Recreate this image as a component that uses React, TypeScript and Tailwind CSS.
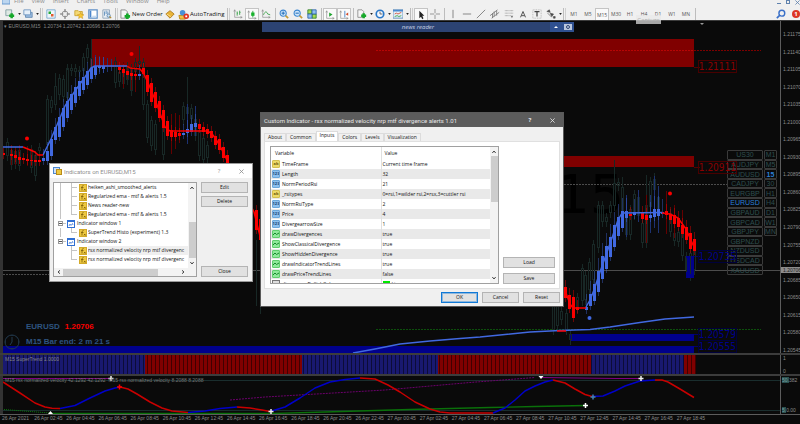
import React from "react";

type Bar = [x: number, top: number, bottom: number];

const BLUE = "#4169e1";
const RED = "#fb0000";
const SLATE = "#182826";

/* ---------- toolbar ---------- */

const menuItems = ["File", "View", "Insert", "Charts", "Tools", "Window", "Help"];
const timeframes = ["M1", "M5", "M15", "M30", "H1", "H4", "D1", "W1", "MN"];

function Tool({ label, active, children }: { label: string; active?: boolean; children: React.ReactNode }) {
  return (
    <button
      type="button"
      aria-label={label}
      className={`flex h-3 w-[14px] shrink-0 items-center justify-center ${active ? "border-x border-t border-[#c4c4c4] bg-[#fafafa]" : ""}`}
    >
      <svg viewBox="0 0 12 12" className="size-[10px] shrink-0" fill="none">
        {children}
      </svg>
    </button>
  );
}

function Drop() {
  return (
    <span className="flex w-1 shrink-0 items-center justify-center">
      <svg viewBox="0 0 4 3" className="h-[2px] w-[3px] shrink-0">
        <path d="M0 0h4L2 3z" fill="#222" />
      </svg>
    </span>
  );
}

function Sep({ wide }: { wide?: boolean }) {
  return (
    <span className={`flex h-3 shrink-0 justify-center gap-px ${wide ? "w-[5px]" : "w-1"}`}>
      <i className="w-px bg-[#bdbdbd]" />
      {wide && <i className="w-px bg-[#d0d0d0]" />}
    </span>
  );
}

const Plus = () => <path d="M8 5v6M5 8h6" stroke="#16a82a" strokeWidth="3" />;
const Axes = () => <path d="M2 1v9h9M1 3l1-2 1 2M9 9l2 1-2 1" stroke="#8c8c8c" strokeWidth=".8" />;

function Toolbar() {
  return (
    <div className="flex h-3 items-center bg-[#f0f0f0] pl-[3px] font-['Open_Sans','Noto_Sans',sans-serif] text-[6px] leading-3 text-[#111]">
      <Tool label="New chart">
        <path d="M1 1h7v7H1z" fill="#dfe9e4" stroke="#7d9aa0" />
        <Plus />
      </Tool>
      <Drop />
      <Tool label="Profiles">
        <path d="M3 4h8v6H3z" fill="#9bbce0" stroke="#5f87b0" />
        <path d="M1 1h8v6H1z" fill="#e6f0fa" stroke="#6a93bd" />
      </Tool>
      <Drop />
      <Sep wide />
      <Tool label="Market watch">
        <path d="M1 1h10v10H1z" fill="#eef5fb" stroke="#6fa3cd" />
        <path d="M3 3h3v3H3z" fill="#27a836" />
        <path d="M6 6h3v3H6z" fill="#e25a2c" />
      </Tool>
      <Tool label="Data window">
        <circle cx="6" cy="6" r="3.500" stroke="#888" />
        <path d="M6 0v4M6 8v4M0 6h4M8 6h4" stroke="#777" strokeWidth="1.300" />
      </Tool>
      <Tool label="Navigator">
        <path d="M1 2h4l1 1h4v5H1z" fill="#f4d873" stroke="#c9a02c" />
        <path d="M8 4l1 2.500 3 .3-2 2 .5 2.700L8 10l-2.500 1.500.5-2.700-2-2 3-.3z" fill="#f9c631" stroke="#b98714" strokeWidth=".5" />
      </Tool>
      <Tool label="Terminal">
        <path d="M1 1h10v10H1z" fill="#fff" stroke="#5d8fc6" strokeWidth="1.500" />
        <path d="M2 2h2v8H2z" fill="#4c86cc" />
        <path d="M5 8h5v2H5z" fill="#c9dcf0" />
      </Tool>
      <Tool label="Strategy tester">
        <path d="M1 1h8v10H1z" fill="#e8eef4" stroke="#8ba0b5" />
        <path d="M3 3v5M5 2v4M7 3v4" stroke="#5588b8" />
        <circle cx="8" cy="8" r="2" stroke="#5c87ae" fill="#cfe3f5" />
        <path d="M9 9l2 2" stroke="#b48a30" strokeWidth="1.500" />
      </Tool>
      <Sep wide />
      <button type="button" className="flex h-3 w-[44px] shrink-0 items-center">
        <svg viewBox="0 0 12 12" className="mx-px size-[11px] shrink-0" fill="none">
          <path d="M1 1h5l2 2v7H1z" fill="#f5f5f5" stroke="#888" />
          <Plus />
        </svg>
        <span className="whitespace-nowrap">New Order</span>
      </button>
      <Tool label="MetaEditor">
        <path d="M1 6l5-4 5 4-5 5z" fill="#e9b437" stroke="#a9761a" />
        <path d="M2 6l5 3" stroke="#fbe39a" />
      </Tool>
      <button type="button" className="flex h-3 w-[49px] shrink-0 items-center">
        <svg viewBox="0 0 12 12" className="mx-px size-[11px] shrink-0" fill="none">
          <path d="M1 7h8l-1 4H2z" fill="#f0c245" stroke="#b98714" />
          <circle cx="5" cy="4" r="3" fill="#4a90d6" />
          <circle cx="9" cy="8" r="3" fill="#e03322" />
          <path d="M8 7h2v2H8z" fill="#fff" />
        </svg>
        <span className="whitespace-nowrap">AutoTrading</span>
      </button>
      <Sep wide />
      <Tool label="Bar chart">
        <Axes />
        <path d="M5 3v5M8 2v5M5 5h1M8 4h1" stroke="#2c9b3c" />
      </Tool>
      <Tool label="Candlesticks" active>
        <Axes />
        <path d="M7 1v8" stroke="#1a9b2a" />
        <path d="M5 3h4v4H5z" fill="#17b32c" />
      </Tool>
      <Tool label="Line chart">
        <Axes />
        <path d="M3 7c2-5 4-4 5-1l3 1" stroke="#2c9b3c" />
      </Tool>
      <Sep />
      <Tool label="Zoom in">
        <path d="M7 7l4 4" stroke="#c59a35" strokeWidth="2" />
        <circle cx="5" cy="5" r="3.700" fill="#cfe6fb" stroke="#3b86cf" strokeWidth="1.300" />
        <path d="M3 5h4M5 3v4" stroke="#1f6bb5" strokeWidth="1.200" />
      </Tool>
      <Tool label="Zoom out">
        <path d="M7 7l4 4" stroke="#c59a35" strokeWidth="2" />
        <circle cx="5" cy="5" r="3.700" fill="#cfe6fb" stroke="#3b86cf" strokeWidth="1.300" />
        <path d="M3 5h4" stroke="#1f6bb5" strokeWidth="1.200" />
      </Tool>
      <Tool label="Tile windows">
        <path d="M1 1h5v5H1zM6 6h5v5H6z" fill="#a6dc4e" stroke="#2c7d2c" />
        <path d="M6 1h5v5H6zM1 6h5v5H1z" fill="#8fc0ee" stroke="#2b62a8" />
      </Tool>
      <Sep />
      <Tool label="Auto scroll" active>
        <Axes />
        <path d="M5 3l4 2.500L5 8z" fill="#1fa52f" />
      </Tool>
      <Tool label="Chart shift" active>
        <Axes />
        <path d="M7 1v8" stroke="#3b78c2" />
        <path d="M11 3L8 5l3 2z" fill="#d34a28" />
      </Tool>
      <Sep />
      <Tool label="Indicators">
        <path d="M1 1h5l2 2v7H1z" fill="#f5f5f5" stroke="#888" />
        <Plus />
      </Tool>
      <Drop />
      <Tool label="Periodicity">
        <circle cx="6" cy="6" r="4.500" fill="#f4f9ff" stroke="#2a78c8" strokeWidth="2" />
        <path d="M6 3v3h3" stroke="#555" />
      </Tool>
      <Drop />
      <Tool label="Templates">
        <path d="M0 1h12v10H0z" fill="#e5effa" stroke="#5585b5" />
        <path d="M0 1h12v2H0z" fill="#4c8bd0" />
        <path d="M2 6l2-1 2 1 4-2" stroke="#d04a2a" />
        <path d="M2 9l3-1 2 1 3-1" stroke="#2ca03a" />
      </Tool>
      <Drop />
      <Sep wide />
      <Tool label="Cursor" active>
        <path d="M4 1v9l2-2 1.500 3 1.500-1-1.500-3H10z" fill="#222" />
      </Tool>
      <Tool label="Crosshair">
        <path d="M6 0v5M6 7v5M0 6h5M7 6h5" stroke="#888" />
      </Tool>
      <Sep />
      <Tool label="Vertical line">
        <path d="M6 1v10" stroke="#888" strokeWidth="1.200" />
      </Tool>
      <Tool label="Horizontal line">
        <path d="M1 6h10" stroke="#888" strokeWidth="1.200" />
      </Tool>
      <Tool label="Trendline">
        <path d="M1 11L11 1" stroke="#888" strokeWidth="1.200" />
      </Tool>
      <Tool label="Channel">
        <path d="M0 8l9-7M2 11l9-7M3 5v6M5 3v6M8 2v6" stroke="#777" />
      </Tool>
      <Tool label="Fibonacci">
        <path d="M1 2h10M1 5h10M1 8h7" stroke="#999" strokeDasharray="1 .5" />
        <path d="M8 8h3l-1.500 3z" fill="#777" />
      </Tool>
      <Tool label="Text">
        <path d="M3 10L6 3l3 7M4 8h4" stroke="#555" strokeWidth="1.200" />
      </Tool>
      <Tool label="Text label">
        <path d="M1 1h10v10H1z" stroke="#aaa" strokeDasharray="1 1" />
        <path d="M3 3h6M6 3v6" stroke="#444" strokeWidth="1.500" />
      </Tool>
      <Tool label="Arrows">
        <path d="M1 3l3-2 1 3zM5 5l4 1-2 3zM9 9h2v2H9zM2 5l5 5" fill="#444" stroke="#555" strokeWidth=".8" />
      </Tool>
      <Drop />
      <Sep wide />
      {timeframes.map((t) => (
        <button
          key={t}
          type="button"
          className={`flex h-3 w-[14px] shrink-0 items-center justify-center text-[5px] text-[#555] ${t === "M15" ? "border-x border-t border-[#c4c4c4] bg-[#fafafa]" : ""}`}
        >
          {t}
        </button>
      ))}
      <Sep />
      <span className="flex-1" />
      <Tool label="Search">
        <circle cx="7" cy="5" r="3.500" stroke="#3a70c8" strokeWidth="1.700" />
        <path d="M5 7l-4 4" stroke="#3a70c8" strokeWidth="2" />
      </Tool>
      <button type="button" aria-label="Alerts" className="flex w-3 shrink-0 items-center justify-end">
        <b className="flex size-2 items-center justify-center rounded-full bg-[#dc3524] text-[6px] leading-none text-white">1</b>
      </button>
    </div>
  );
}

/* ---------- chart drawing ---------- */

const upLeft: Bar[] = [[43, 158, 161], [47, 151, 161], [51, 139, 156], [55, 127, 140], [59, 117, 137], [63, 108, 127], [67, 101, 118], [71, 94, 110], [75, 87, 103], [79, 81, 96], [83, 77, 90], [87, 71, 85], [91, 68, 79], [95, 66, 75], [99, 66, 68], [103, 66, 69], [139, 74, 76], [183, 133, 135], [187, 129, 133], [191, 124, 132], [195, 123, 127]];
const downLeft: Bar[] = [[3, 153, 155], [11, 154, 156], [15, 155, 158], [19, 157, 160], [23, 158, 160], [27, 159, 161], [31, 160, 161], [35, 160, 162], [39, 160, 162], [119, 67, 70], [123, 69, 73], [127, 71, 75], [131, 73, 76], [135, 74, 76], [143, 68, 74], [147, 75, 92], [151, 83, 102], [155, 92, 108], [159, 101, 118], [163, 110, 128], [167, 121, 136], [171, 130, 137], [175, 132, 137], [179, 133, 136], [199, 124, 129], [203, 127, 132], [207, 129, 134], [211, 131, 138], [215, 136, 145], [219, 139, 150], [223, 147, 158], [227, 155, 172], [251, 203, 224], [256, 210, 230], [260, 219, 240]];
const upRight: Bar[] = [[586, 307, 310], [590, 294, 306], [594, 284, 301], [598, 271, 292], [602, 256, 279], [606, 246, 269], [610, 237, 257], [614, 225, 247], [618, 217, 236], [622, 211, 228], [626, 211, 218], [634, 212, 215], [650, 215, 218], [654, 209, 217], [658, 209, 216], [662, 212, 214]];
const downRight: Bar[] = [[565, 287, 298], [569, 295, 309], [573, 297, 318], [577, 307, 310], [630, 214, 216], [642, 213, 219], [646, 215, 220], [666, 211, 215], [670, 214, 220], [674, 215, 224], [678, 218, 227], [682, 225, 234], [686, 227, 240], [690, 233, 249], [694, 239, 251]];
const ghosts: Bar[] = [[7, 142, 156], [11, 150, 165], [15, 151, 164], [19, 150, 166], [31, 149, 168], [35, 155, 176], [39, 147, 151], [47, 99, 145], [51, 100, 108], [55, 86, 105], [59, 78, 95], [63, 79, 97], [67, 68, 98], [71, 68, 71], [75, 68, 72], [79, 70, 72], [83, 57, 71], [87, 48, 58], [91, 58, 68], [115, 61, 83], [119, 72, 82], [123, 72, 84], [127, 66, 80], [131, 68, 91], [135, 62, 72], [139, 61, 64], [143, 62, 105], [147, 104, 138], [151, 120, 146], [155, 124, 150], [163, 120, 155], [183, 106, 120], [187, 107, 114], [191, 108, 119], [195, 119, 136], [199, 130, 156], [203, 138, 160], [207, 145, 158], [553, 306, 330], [557, 300, 326], [561, 311, 320], [566, 313, 330], [570, 334, 340], [577, 297, 308], [582, 268, 301], [585, 275, 300], [589, 262, 290], [593, 244, 280], [598, 205, 248], [602, 205, 222], [606, 217, 222], [610, 205, 213], [614, 183, 206], [618, 182, 186], [622, 187, 212], [626, 216, 235], [630, 209, 235], [634, 194, 215], [638, 197, 216], [642, 223, 243], [646, 205, 243], [650, 181, 207], [654, 179, 190], [658, 197, 215], [670, 213, 232], [674, 233, 241], [678, 232, 242], [682, 229, 256], [686, 256, 270], [690, 253, 276], [694, 246, 270]];

function Bars({ bars, color, reach }: { bars: Bar[]; color: string; reach: number }) {
  return (
    <g>
      {bars.map(([x, a, b]) => (
        <g key={x} fill={color}>
          <rect x={x} y={a - reach} width="1" height={b - a + reach + 4} opacity=".4" />
          <rect x={x - 1} y={a} width="3" height={b - a} />
        </g>
      ))}
    </g>
  );
}

function PriceDrawing() {
  return (
    <svg viewBox="0 21 780 332" preserveAspectRatio="none" className="absolute inset-0 size-full" fill="none">
      <path d="M376 50.500H761" stroke="#7c0000" strokeDasharray="2 1" />
      <g fill="#800000">
        <rect x="91" y="39" width="603" height="28" />
        <rect x="540" y="156" width="154" height="11" />
      </g>
      <path d="M376 50.500H694" stroke="#b80404" strokeDasharray="2 1" />
      <path d="M694 67.500h6M694 167.500h6" stroke="#500" />
      <g fill="#00008b">
        <rect x="3" y="346" width="691" height="7" />
        <rect x="570" y="334" width="124" height="7" />
      </g>
      <path d="M694 334.500h6M694 346.500h6M694 256.500h6" stroke="#00006b" />
      <path d="M376 329.500H761" stroke="#0c500c" strokeDasharray="2 1" />
      <path d="M3 274.500H50M564 184.500H727" stroke="#4c4c4c" strokeDasharray="2 1" />
      <path d="M3 270.500H780" stroke="#4c4c4c" />

      {ghosts.map(([x, a, b]) => (
        <g key={x} stroke={SLATE} strokeWidth="1">
          <path d={`M${x + 0.5} ${a - 4}V${a}M${x + 0.5} ${b}V${b + 5}`} />
          <rect x={x - 0.5} y={a + 0.5} width="2" height={b - a - 1} />
        </g>
      ))}
      <path d="M55.500 73v13M67.500 64v6M91.500 39v20M187.500 77v30M139.500 46v15M614.500 160v23M622.500 177v10M646.500 175v30M654.500 173v6M256.500 240v66M260.500 240v74" stroke={SLATE} />
      <path d="M11.500 145v20M15.500 147v18M19.500 145v19M27.500 146v20M31.500 148v18M123.500 62v26M131.500 70v20M135.500 72v20M171.500 114v40M175.500 113v36M179.500 115v28M646.500 195v48M666.500 191v43M674.500 205v33M682.500 210v24" stroke="#640000" />
      <path d="M95.500 55v22M99.500 56v18M103.500 57v16M107.500 58v14M111.500 59v12M187.500 104v40M195.500 106v30M626.500 195v42M638.500 190v32M650.500 195v38M654.500 176v52M658.500 186v47" stroke="#1d3272" />
      <rect x="686" y="256" width="8" height="22" fill="#00008b" />
      <path d="M686.500 258v14M690.500 256v18" stroke={SLATE} />

      <Bars bars={upLeft} color={BLUE} reach={9} />
      <Bars bars={upRight} color={BLUE} reach={13} />
      <Bars bars={downLeft} color={RED} reach={5} />
      <Bars bars={downRight} color={RED} reach={7} />

      <g strokeWidth="1.500" strokeLinejoin="round">
        <path
          d="M3 147H23M43 155L51 139L57 125L65 106L75 91L85 77L91 68L95 66H127M586 307L590 300L594 290L600 272L606 255L612 238L618 220L622 213L662 212.500M353 353L375 349L400 344L430 341L460 338.500L480 337L500 335L530 332L560 330.500L590 329.500L610 327L640 322.500L665 319L694 317"
          stroke={BLUE}
        />
        <path
          d="M23 147L35 152L38 155H43M127 66L130 68L140 69L144 74L149 85L156 102L165 127L170 131H208L213 135L217 141L220 146L226 158L230 168M249 202L254 212L260 236M562 284L566 293L570 304L573 308H586M557 331H566M662 213L670 214L678 218L686 229L694 247"
          stroke={RED}
        />
      </g>
      <g fill={RED}>
        <circle cx="131.500" cy="54" r="2" />
        <circle cx="27" cy="138.500" r="2" />
        <circle cx="670" cy="193.500" r="2" />
      </g>
      <circle cx="589.500" cy="318" r="2" fill={BLUE} />
      <path d="M700 23h4l-2 2z" fill="#999" />
      <g stroke="#223a4e">
        <circle cx="12" cy="342" r="7" />
        <path d="M12 337v5l-2 3M12 335v1M12 348v1M5 342h1M18 342h1" />
      </g>
    </svg>
  );
}

const trend: [number, number, string][] = [
  [3, 145, "#191970"],
  [145, 302, "#800000"],
  [302, 438, "#191970"],
  [438, 591, "#800000"],
  [591, 684, "#191970"],
  [684, 696, "#800000"],
];

function TrendDrawing() {
  const gaps = Array.from({ length: 173 }, (_, i) => 7 + i * 4);
  return (
    <svg viewBox="0 355 780 19" preserveAspectRatio="none" className="absolute inset-0 size-full">
      {trend.map(([a, b, c]) => (
        <rect key={a} x={a} y="355" width={b - a} height="19" fill={c} />
      ))}
      {gaps.map((x) => (
        <rect key={x} x={x} y="355" width="1" height="19" fill="#000" opacity=".5" />
      ))}
    </svg>
  );
}

function Star({ x, y, color }: { x: number; y: number; color: string }) {
  return <path d={`M${x - 2.5} ${y}h5M${x} ${y - 2.5}v5`} stroke={color} strokeWidth="1.500" />;
}

function OscillatorDrawing() {
  return (
    <svg viewBox="0 376 780 38" preserveAspectRatio="none" className="absolute inset-0 size-full" fill="none">
      <path d="M3 380.500H780M3 410.500H780" stroke="#1a2e2e" />
      <path d="M3 378.500H111M541 377.500L617 378.500H641" stroke="#800080" />
      <path d="M230 400L265 397L385 390L470 382.500L535 377.500" stroke="#6c006c" strokeDasharray="2 1" />
      <path d="M4 409.500L50 413" stroke="#0a7a0a" strokeDasharray="1 1" />
      <path d="M50 413.500H275L325 412L410 409.500L490 407.500L535 406.500L586 405.500" stroke="#0a700a" strokeWidth="1.300" />
      <g strokeWidth="1.500" strokeLinejoin="round">
        <path
          d="M3 382L20 393L35 403L45 407L52 408.300L60 408.500M120 387L128 389L137 394L150 402L162 408L172 411L188 412.500M237 407L250 408L262 410L270 411.500M360 378L375 379L388 385L400 392L415 402L430 409L440 412L450 413H493M553 380L565 383L575 389L585 394.500L592 396.500M655 380H662L668 382L680 389L694 397.500"
          stroke="#c80000"
        />
        <path
          d="M60 408.500L75 405.500L90 398L105 391L115 388L120 387M188 412.500L205 411L220 408.500L237 407M270 411.500L285 407L300 398L315 388L330 382L345 379.500L360 378M493 413L505 408L515 400L525 391L535 386L545 382L553 380M592 396.500L603 396L615 391L625 386L640 381L655 380"
          stroke="#0000c8"
        />
      </g>
      <Star x={111} y={378.5} color="#eee" />
      <Star x={119.5} y={387} color={RED} />
      <Star x={271} y={411.5} color="#eee" />
      <Star x={641} y={378.5} color="#eee" />
      <Star x={593} y={397} color="#4682b4" />
      <Star x={585.5} y={405.5} color="#fff" />
      <path d="M48 414h5l-2.500-3zM538.500 376h5l-2.500 3z" fill="#fff" />
    </svg>
  );
}

/* ---------- chart overlays ---------- */

const symbols: [string, string?][] = [
  ["US30", "M1"], ["AUDJPY", "M5"], ["AUDUSD", "15"], ["CADJPY", "30"], ["EURGBP", "H1"], ["EURUSD", "H4"], ["GBPAUD", "D1"],
  ["GBPCAD", "W1"], ["GBPJPY", "MN"], ["GBPNZD"], ["NZDUSD"], ["USDCAD"], ["XAUUSD"],
];

function SymbolPanel() {
  const cell = "flex items-center justify-center rounded-[1px] border border-[#3a3a3a]";
  return (
    <div className="absolute top-[129px] right-[3px] flex h-[125px] w-[50px] flex-col text-[7px] leading-none text-[#2f4f4f]">
      {symbols.map(([s, t]) => (
        <div key={s} className="flex flex-1 gap-px">
          <button type="button" className={`${cell} w-9 ${s === "EURUSD" ? "text-[#2c80d8]" : ""}`}>{s}</button>
          {t && <button type="button" className={`${cell} w-[13px] ${t === "15" ? "font-bold text-[#2c80d8]" : ""}`}>{t}</button>}
        </div>
      ))}
    </div>
  );
}

function PriceLabel({ place, value, blue }: { place: string; value: string; blue?: boolean }) {
  return (
    <span
      className={`absolute right-[43px] flex h-[13px] items-center border font-['DejaVu_Sans_Condensed','DejaVu_Sans',sans-serif] text-[10px] leading-none ${place} ${blue ? "border-[#00003c] text-[#00008b]" : "border-[#480000] text-[#8b0000]"}`}
    >
      {value}
    </span>
  );
}

const prices = ["1.21175", "1.21140", "1.21105", "1.21070", "1.21035", "1.21000", "1.20965", "1.20930", "1.20895", "1.20860", "1.20825", "1.20790", "1.20755", "1.20720", "1.20685", "1.20650", "1.20615", "1.20580", "1.20545"];

const times = [
  "26 Apr 2021",
  ...["02", "04", "06", "08", "10", "12", "14", "16", "18", "20", "22"].map((h) => `26 Apr ${h}:45`),
  ...["00", "02", "04", "06", "08", "10", "12", "14", "16", "18"].map((h) => `27 Apr ${h}:45`),
];

function AxisColumn({ children }: { children?: React.ReactNode }) {
  return <div className="relative w-5 shrink-0 overflow-hidden border-l border-[#5c5c5c] text-[5px] leading-[6px] text-[#8a8a8a]">{children}</div>;
}

function Chart() {
  return (
    <section className="flex min-h-[403px] flex-1 flex-col bg-[#0a0a0a] font-['Liberation_Sans',Arial,sans-serif]">
      <div className="flex flex-1 border-t border-[#3c3c3c]">
        <div className="relative flex-1 overflow-hidden border-l-[3px] border-[#333]">
          <span aria-hidden="true" className="absolute top-[142px] right-[156px] font-['DejaVu_Sans',sans-serif] text-[54px] leading-[64px] text-black">M15</span>
          <div className="absolute inset-y-0 right-0 -left-[3px]">
            <PriceDrawing />
          </div>
          <p className="absolute top-[2px] left-[1px] text-[5px] leading-[6px] text-[#858585]">▾ EURUSD,M15&nbsp; 1.20734 1.20742 1.20696 1.20706</p>
          <SymbolPanel />
          <PriceLabel place="top-[39px]" value="1.21111" />
          <PriceLabel place="top-[140px]" value="1.20911" />
          <PriceLabel place="top-[229px]" value="1.20735" blue />
          <PriceLabel place="top-[307px]" value="1.20579" blue />
          <PriceLabel place="top-[319px]" value="1.20555" blue />
          <div className="absolute bottom-[6px] left-[23px] flex flex-col gap-1 text-[8px] leading-[11px] font-bold text-[#2e5480]">
            <p className="flex gap-[5px]"><span>EURUSD</span><span className="text-[#fb0000]">1.20706</span></p>
            <p>M15 Bar end: 2 m 21 s</p>
          </div>
        </div>
        <AxisColumn>
          <div className="absolute inset-x-0 top-[10px] bottom-0 flex flex-col justify-between">
            {prices.map((p) => <span key={p} className="pl-[2px]">{p}</span>)}
          </div>
          <span className="absolute inset-x-0 top-[246px] bg-[#8c8c8c] pl-[2px] text-[#222]">1.20706</span>
        </AxisColumn>
      </div>

      <div className="flex h-[21px] border-t-2 border-[#3c3c3c]">
        <div className="relative flex-1 overflow-hidden border-l-[3px] border-[#333]">
          <div className="absolute inset-y-0 right-0 -left-[3px]"><TrendDrawing /></div>
          <p className="relative pt-px pl-[2px] text-[5px] leading-[6px] text-[#858585]">M15 SuperTrend 1.0000</p>
        </div>
        <AxisColumn>
          <div className="flex h-full flex-col justify-between pl-[2px]"><span>1</span><span>0</span></div>
        </AxisColumn>
      </div>

      <div className="flex h-10 border-t-2 border-[#3c3c3c]">
        <div className="relative flex-1 overflow-hidden border-l-[3px] border-[#333]">
          <div className="absolute inset-y-0 right-0 -left-[3px]"><OscillatorDrawing /></div>
          <p className="relative pt-px pl-[2px] text-[5px] leading-[6px] text-[#777]">
            M15 rsx normalized velocity 42.1292 42.1292&nbsp; M15 rsx normalized velocity 8.2088 8.2088
          </p>
        </div>
        <AxisColumn>
          <div className="flex h-full flex-col justify-between py-px pl-px">
            <span><span className="bg-[#2a5050] text-[#78a0a0]">50.</span>382</span>
            <span><span className="bg-[#2a5050] text-[#78a0a0]">5.</span>0.00</span>
          </div>
        </AxisColumn>
      </div>

      <div className="h-[10px] border-t border-[#5c5c5c] text-[5px] leading-[7px] text-[#8a8a8a]">
        <div className="grid w-[88.6%] grid-cols-[repeat(22,minmax(0,1fr))] pl-[2px]">
          {times.map((t) => <span key={t} className="whitespace-nowrap">{t}</span>)}
        </div>
      </div>
    </section>
  );
}

/* ---------- windows ---------- */

function WinButton({ children, primary, className }: { children: React.ReactNode; primary?: boolean; className: string }) {
  return (
    <button
      type="button"
      className={`flex h-[11px] items-center justify-center border bg-[#e1e1e1] text-[5px] leading-none text-[#111] ${primary ? "border-[#1079d6] ring-1 ring-[#1079d6]/40 ring-inset" : "border-[#b4b4b4]"} ${className}`}
    >
      {children}
    </button>
  );
}

function Cross() {
  return (
    <svg viewBox="0 0 6 6" className="size-[5px]" fill="none" stroke="currentColor">
      <path d="M.5.5l5 5M5.500.5l-5 5" />
    </svg>
  );
}

function Chevron({ turn }: { turn: string }) {
  return (
    <svg viewBox="0 0 6 6" className={`size-1 ${turn}`} fill="none" stroke="#444" strokeWidth="1.500">
      <path d="M.5 4.500L3 1.500l2.500 3" />
    </svg>
  );
}

function FnIcon() {
  return (
    <svg viewBox="0 0 8 8" className="size-[8px] shrink-0" fill="none">
      <rect x=".5" y=".5" width="7" height="7" fill="#edc840" stroke="#d3aa2a" />
      <path d="M4.500 1.500c-1.500 0-1.500 1-1.500 5M2 3.500h2.500M5 5l1.500 1.500M6.500 5L5 6.500" stroke="#7a5a08" strokeWidth=".8" />
    </svg>
  );
}

function WindowIcon() {
  return (
    <svg viewBox="0 0 8 8" className="size-[8px] shrink-0" fill="none">
      <rect x=".5" y=".5" width="7" height="7" fill="#fff" stroke="#2f6fd4" />
      <path d="M0 0h8v2H0z" fill="#2f6fd4" />
      <path d="M2 6l1-2 1 1.500L5.500 3.500 6 5" stroke="#2f6fd4" strokeWidth=".7" />
    </svg>
  );
}

const tree: { text: string; parent?: boolean; chosen?: boolean; last?: boolean }[] = [
  { text: "heiken_ashi_smoothed_alerts" },
  { text: "Regularized ema - mtf & alerts 1.5" },
  { text: "News reader-new" },
  { text: "Regularized ema - mtf & alerts 1.5", last: true },
  { text: "Indicator window 1", parent: true },
  { text: "SuperTrend Histo (experiment) 1.3", last: true },
  { text: "Indicator window 2", parent: true },
  { text: "rsx normalized velocity nrp mtf divergenc", chosen: true },
  { text: "rsx normalized velocity nrp mtf divergenc", last: true },
];

function IndicatorsWindow() {
  return (
    <section className="absolute top-[163px] left-[49px] flex w-[204px] flex-col border border-[#9a9a9a] bg-[#f0f0f0] font-['Open_Sans','Noto_Sans',sans-serif] text-[#111]">
      <header className="flex h-[14px] items-center bg-white pl-[3px] text-[#909090]">
        <svg viewBox="0 0 9 8" className="mr-[2px] h-2 w-[9px]" fill="none">
          <rect x=".5" y=".5" width="6" height="6" fill="#cfe1f7" stroke="#4b86cf" />
          <rect x="3.500" y="2.500" width="5" height="5" fill="#edc840" stroke="#b98c18" />
        </svg>
        <h2 className="flex-1 font-['Roboto','Open_Sans',sans-serif] text-[6px]">Indicators on EURUSD,M15</h2>
        <button type="button" aria-label="Help" className="w-[22px] text-[6px]">?</button>
        <button type="button" aria-label="Close window" className="flex w-[22px] justify-center"><Cross /></button>
      </header>
      <div className="flex gap-1 p-[4px] pl-[3px]">
        <div className="flex h-[95px] min-w-0 flex-1 flex-col border border-[#a0a0a0] bg-white">
          <div className="flex min-h-0 flex-1">
            <ul className="min-w-0 flex-1 overflow-hidden text-[5px] leading-[9px]">
              {tree.map((n, i) => (
                <li key={i} className="flex h-[9px] items-center whitespace-nowrap">
                  {n.parent ? (
                    <>
                      <span className="ml-1 flex size-[5px] items-center justify-center border border-[#999]"><i className="h-px w-[3px] bg-[#555]" /></span>
                      <i className="mr-px h-px w-[3px] bg-[#c4c4c4]" />
                      <WindowIcon />
                      <span className="pl-[2px]">{n.text}</span>
                    </>
                  ) : (
                    <>
                      <i className={`ml-[6px] h-[9px] w-[11px] ${i < 6 ? "border-l border-[#c4c4c4]" : ""}`} />
                      <span className="flex h-[9px] w-[6px] flex-col">
                        <i className="h-[5px] border-b border-l border-[#c4c4c4]" />
                        {!n.last && <i className="flex-1 border-l border-[#c4c4c4]" />}
                      </span>
                      <span className="mr-px w-px" />
                      <FnIcon />
                      <span className={`ml-px flex-1 overflow-hidden ${n.chosen ? "bg-[#efefef]" : ""}`}>{n.text}</span>
                    </>
                  )}
                </li>
              ))}
            </ul>
            <div className="flex w-2 flex-col items-center justify-between bg-[#f3f3f3] py-[3px]">
              <Chevron turn="" />
              <i className="mt-[32px] w-[7px] flex-1 bg-[#cdcdcd]" />
              <Chevron turn="mt-[3px] rotate-180" />
            </div>
          </div>
          <div className="flex h-2 items-center bg-[#f3f3f3] px-[3px]">
            <Chevron turn="-rotate-90" />
            <i className="mx-[2px] h-[7px] w-[95px] bg-[#cdcdcd]" />
            <span className="flex-1" />
            <span className="mr-2 flex"><Chevron turn="rotate-90" /></span>
          </div>
        </div>
        <div className="flex w-[47px] flex-col gap-[3px]">
          <WinButton className="w-full">Edit</WinButton>
          <WinButton className="w-full">Delete</WinButton>
          <span className="flex-1" />
          <WinButton className="w-full">Close</WinButton>
        </div>
      </div>
    </section>
  );
}

type Kind = "ab" | "123" | "bool";
const inputs: [Kind, string, string][] = [
  ["ab", "TimeFrame", "Current time frame"],
  ["123", "Length", "32"],
  ["123", "NormPeriodRsi", "21"],
  ["ab", "_rsitypes", "0=rsi,1=wilder rsi,2=rsx,3=cuttler rsi"],
  ["123", "NormRsiType", "2"],
  ["123", "Price", "4"],
  ["123", "DivergearrowSize", "1"],
  ["bool", "drawDivergences", "true"],
  ["bool", "ShowClassicalDivergence", "true"],
  ["bool", "ShowHiddenDivergence", "true"],
  ["bool", "drawIndicatorTrendLines", "true"],
  ["bool", "drawPriceTrendLines", "false"],
];

function KindIcon({ kind }: { kind: Kind }) {
  if (kind === "bool")
    return (
      <span className="flex size-2 shrink-0 items-center justify-center rounded-[1px] border border-[#5fcf6e] bg-[#8fe89a]">
        <svg viewBox="0 0 6 6" className="size-[6px]" fill="none" stroke="#158a2a"><path d="M0 4l2-2 1.500 1.500L6 2" /></svg>
      </span>
    );
  return (
    <span className={`flex size-2 shrink-0 items-center justify-center overflow-hidden rounded-[1px] border text-[4px] leading-none font-bold ${kind === "ab" ? "border-[#d3bf50] bg-[#ecd968] text-[#6b5a08]" : "border-[#6ba8dc] bg-[#8dc0ee] text-[#123f70]"}`}>
      {kind}
    </span>
  );
}

const tabs = ["About", "Common", "Inputs", "Colors", "Levels", "Visualization"];

function PropertiesWindow() {
  return (
    <section className="absolute top-[112px] left-[260px] flex w-[304px] flex-col border border-[#5a5a5a] bg-[#f0f0f0] font-['Open_Sans','Noto_Sans',sans-serif] text-[5px] text-[#111]">
      <header className="flex h-[14px] items-center bg-[#5c5c5c] pl-[3px] text-[#e6e6e6]">
        <h2 className="flex-1 font-['Roboto','Open_Sans',sans-serif] text-[6px]">Custom Indicator - rsx normalized velocity nrp mtf divergence alerts 1.01</h2>
        <button type="button" aria-label="Help" className="w-[22px] text-[6px] font-bold">?</button>
        <button type="button" aria-label="Close window" className="flex w-[22px] justify-center"><Cross /></button>
      </header>
      <div className="flex flex-col px-[3px] pt-1 pb-[3px]">
        <div role="tablist" className="flex h-[10px] items-end">
          {tabs.map((t) => (
            <button
              key={t}
              type="button"
              role="tab"
              aria-selected={t === "Inputs"}
              className={`border-x border-t border-[#dcdcdc] px-[3px] leading-[7px] ${t === "Inputs" ? "h-[10px] bg-white pb-[2px]" : "h-2"}`}
            >
              {t}
            </button>
          ))}
        </div>
        <div className="flex gap-1 border border-[#e0e0e0] bg-white p-1 pl-[5px]">
          <div className="flex h-[138px] flex-1 overflow-hidden border border-[#a0a0a0]">
            <table className="h-fit flex-1 table-fixed border-collapse text-left leading-[6px]">
              <thead>
                <tr className="h-[12px]">
                  <th className="w-[110px] border-r border-[#e0e0e0] pl-1 font-normal">Variable</th>
                  <th className="pl-[3px] font-normal">Value</th>
                </tr>
              </thead>
              <tbody>
                {inputs.map(([k, name, value], i) => (
                  <tr key={name} className={`h-[10px] ${i % 2 ? "bg-[#e9e9e9]" : ""}`}>
                    <td className="border-r border-[#e0e0e0] p-0">
                      <span className="flex items-center gap-[2px] pl-px"><KindIcon kind={k} />{name}</span>
                    </td>
                    <td className="p-0 pl-px">{value}</td>
                  </tr>
                ))}
                <tr className="h-[10px]">
                  <td className="border-r border-[#e0e0e0] p-0">
                    <span className="flex items-center gap-[2px] pl-px"><i className="size-2 border border-[#777] bg-[#ddd]" />divergenceBullishColor</span>
                  </td>
                  <td className="p-0 pl-px"><span className="flex items-center gap-[2px]"><i className="h-[6px] w-[7px] bg-[#00e800]" />Lime</span></td>
                </tr>
              </tbody>
            </table>
            <div className="flex w-2 shrink-0 flex-col items-center bg-[#f3f3f3] py-[3px]">
              <Chevron turn="" />
              <i className="mt-[2px] h-[46px] w-[7px] bg-[#cdcdcd]" />
              <span className="flex-1" />
              <Chevron turn="rotate-180" />
            </div>
          </div>
          <div className="flex w-[52px] flex-col justify-end gap-[5px]">
            <WinButton className="w-full">Load</WinButton>
            <WinButton className="w-full">Save</WinButton>
          </div>
        </div>
        <div className="flex justify-end gap-1 pt-[3px]">
          <WinButton primary className="w-[37px]">OK</WinButton>
          <WinButton className="w-[37px]">Cancel</WinButton>
          <WinButton className="w-[37px]">Reset</WinButton>
        </div>
      </div>
    </section>
  );
}

export default function App() {
  return (
    <main className="relative flex min-h-screen flex-col overflow-hidden bg-[#0a0a0a]">
      <nav className="flex h-2 items-center overflow-hidden bg-[#f0f0f0] pl-[2px] font-['Open_Sans','Noto_Sans',sans-serif] text-[6px] leading-none text-[#8a8a8a]">
        <svg viewBox="0 0 8 6" className="mr-1 h-[6px] w-2 -translate-y-[2px]" fill="none">
          <path d="M0 0h8v5H0z" fill="#bcd6f0" stroke="#6a9bd0" />
        </svg>
        <div className="flex flex-1 -translate-y-[3px] gap-2">
          {menuItems.map((m) => <button key={m} type="button">{m}</button>)}
        </div>
        <div className="flex -translate-y-[2px] gap-[5px] text-[#5f82ad]">
          <button type="button" aria-label="Minimize"><i className="block h-px w-[4px] translate-y-px bg-[#5f82ad]" /></button>
          <button type="button" aria-label="Restore"><i className="block size-[4px] border border-[#5f82ad]" /></button>
          <button type="button" aria-label="Close"><Cross /></button>
        </div>
      </nav>
      <Toolbar />
      <Chart />
      <div className="absolute top-[22px] left-[262px] flex h-[10px] w-[312px] items-center bg-[#2c4373] font-['Open_Sans',sans-serif] text-[6px] leading-none text-[#c8d2e4] italic">
        <span className="flex-1 pl-6 text-center">news reader</span>
        <button type="button" aria-label="Collapse" className="flex h-full w-3 items-center justify-center bg-[#2f5090]">
          <svg viewBox="0 0 4 2" className="h-[2px] w-1"><path d="M0 2h4L2 0z" fill="#fff" /></svg>
        </button>
        <button type="button" aria-label="Snapshot" className="flex h-full w-3 items-center justify-center bg-[#2f5090]">
          <svg viewBox="0 0 8 6" className="h-[6px] w-2" fill="none"><path d="M0 0h8v6H0z" fill="#b9c6de" /><circle cx="4" cy="3" r="1.500" stroke="#2c4373" /></svg>
        </button>
      </div>
      <span className="absolute top-[15px] left-[636px] flex h-[9px] w-[25px] items-end justify-center bg-[#e8e8e8]/70 font-['Open_Sans',sans-serif] text-[6px] leading-[7px] text-[#aaa]">Capture</span>
      <IndicatorsWindow />
      <PropertiesWindow />
    </main>
  );
}
